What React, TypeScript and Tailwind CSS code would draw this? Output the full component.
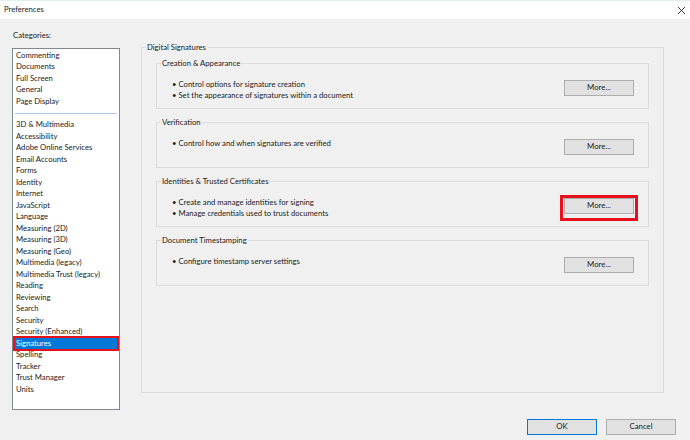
import React from "react";

const cats1 = ["Commenting", "Documents", "Full Screen", "General", "Page Display"];
const cats2 = [
  "3D & Multimedia",
  "Accessibility",
  "Adobe Online Services",
  "Email Accounts",
  "Forms",
  "Identity",
  "Internet",
  "JavaScript",
  "Language",
  "Measuring (2D)",
  "Measuring (3D)",
  "Measuring (Geo)",
  "Multimedia (legacy)",
  "Multimedia Trust (legacy)",
  "Reading",
  "Reviewing",
  "Search",
  "Security",
  "Security (Enhanced)",
  "Signatures",
  "Spelling",
  "Tracker",
  "Trust Manager",
  "Units",
];

const sections = [
  {
    title: "Creation & Appearance",
    lines: ["Control options for signature creation", "Set the appearance of signatures within a document"],
  },
  { title: "Verification", lines: ["Control how and when signatures are verified"] },
  {
    title: "Identities & Trusted Certificates",
    lines: ["Create and manage identities for signing", "Manage credentials used to trust documents"],
    hl: true,
  },
  { title: "Document Timestamping", lines: ["Configure timestamp server settings"] },
];

function Btn({ label, primary }: { label: string; primary?: boolean }) {
  return (
    <div
      className={
        "w-[70px] h-[16px] flex items-center justify-center bg-[#e1e1e1] border text-[7.8px] leading-none " +
        (primary ? "border-[#0078d7]" : "border-[#adadad]")
      }
    >
      {label}
    </div>
  );
}

export default function App() {
  return (
    <div
      className="w-[690px] h-[440px] bg-[#f0f0f0] flex flex-col text-[#1b1b1b] overflow-hidden"
      style={{ fontFamily: 'Lato, "Noto Sans", sans-serif' }}
    >
      <div className="h-[19px] bg-white border-t border-[#dff3ea] flex items-center justify-between pl-[4px] pr-[4px] shrink-0">
        <span className="text-[7.7px] leading-none">Preferences</span>
        <svg width="9" height="9" viewBox="0 0 9 9">
          <path d="M1 1 L8 8 M8 1 L1 8" stroke="#222" strokeWidth="0.9" />
        </svg>
      </div>

      <div className="flex h-[391px] shrink-0">
        <div className="pl-[12px] w-[120px] flex flex-col">
          <div className="pt-[10px] h-[29px] text-[7.7px] leading-[12px] pl-[1px]">Categories:</div>
          <div className="w-[108px] h-[362px] bg-white border border-[#828790] pt-[0.5px] flex flex-col text-[7.7px]">
            {cats1.map((c) => (
              <div key={c} className="h-[11.5px] leading-[11.5px] pl-[3px] whitespace-nowrap">
                {c}
              </div>
            ))}
            <div className="h-[12px] flex items-center px-[2px]">
              <div className="h-[1px] w-full bg-[#a9c9ea]" />
            </div>
            {cats2.map((c) =>
              c === "Signatures" ? (
                <div key={c} className="relative h-[11.5px] mx-[1px]">
                  <div className="h-full bg-[#0078d7] text-white leading-[11.5px] pl-[2px]">{c}</div>
                  <div className="absolute -inset-x-[1px] -top-[2px] -bottom-[2px] border-2 border-[#e8111b]" />
                </div>
              ) : (
                <div key={c} className="h-[11.5px] leading-[11.5px] pl-[3px] whitespace-nowrap">
                  {c}
                </div>
              )
            )}
          </div>
        </div>

        <fieldset className="ml-[21px] mt-[22px] w-[523px] h-[352px] border border-[#dcdcdc] p-0 m-0">
          <legend className="ml-[4px] px-[1px] text-[7.7px] leading-[12px]">Digital Signatures</legend>
          <div className="flex flex-col gap-[7px] mt-[4px] px-[14px]">
            {sections.map((s) => (
              <fieldset key={s.title} className="border border-[#dcdcdc] h-[52px] m-0 p-0">
                <legend className="ml-[4px] px-[1px] text-[7.7px] leading-[12px]">{s.title}</legend>
                <div className="flex justify-between pl-[15px] pr-[14px]">
                  <div className="mt-[10px] text-[7.7px] leading-[10.5px]">
                    {s.lines.map((l) => (
                      <div key={l} className="whitespace-nowrap flex">
                        <span className="mr-[2px]">•</span>
                        <span>{l}</span>
                      </div>
                    ))}
                  </div>
                  <div className="relative mt-[11px]">
                    <Btn label="More..." />
                    {s.hl && <div className="absolute -inset-x-[4px] -inset-y-[3px] border-[3px] border-[#e8111b]" />}
                  </div>
                </div>
              </fieldset>
            ))}
          </div>
        </fieldset>
      </div>

      <div className="flex justify-end gap-[9px] pr-[14px] pt-[9px]">
        <Btn label="OK" primary />
        <Btn label="Cancel" />
      </div>
    </div>
  );
}
